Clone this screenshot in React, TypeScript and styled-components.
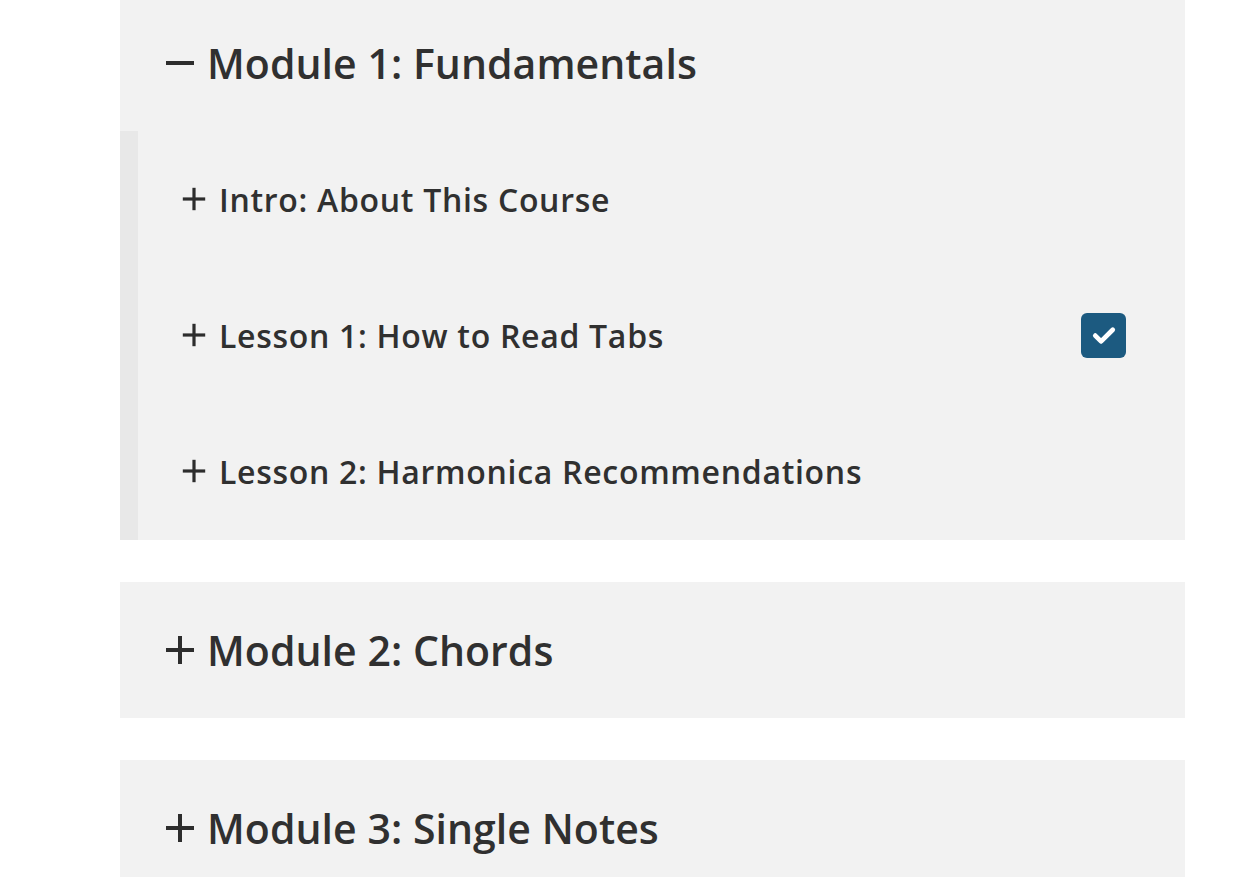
import React from "react";
import styled, { createGlobalStyle } from "styled-components";

const Global = createGlobalStyle`
  html, body { margin: 0; padding: 0; background: #ffffff; }
  body { font-family: "Open Sans", "Lato", "Noto Sans", sans-serif; color: #2f2f2f; }
`;

const Page = styled.div`
  padding-left: 120px;
  width: 1065px;
  margin-top: -5px;
  display: flex;
  flex-direction: column;
  gap: 42px;
`;

const Card = styled.section`
  background: #f2f2f2;
`;

const Header = styled.div`
  height: 136px;
  display: flex;
  align-items: center;
  padding-left: 45px;
  gap: 12px;
`;

const HeaderTitle = styled.h2`
  margin: 0;
  font-size: 41px;
  font-weight: 600;
  letter-spacing: 0.05px;
  color: #303030;
`;

const SubList = styled.div`
  border-left: 18px solid #e8e8e8;
  padding-bottom: 1px;
  display: flex;
  flex-direction: column;
`;

const Row = styled.div`
  height: 136px;
  display: flex;
  align-items: center;
  padding-left: 44px;
  padding-right: 59px;
  gap: 13px;
`;

const RowTitle = styled.span`
  font-size: 32px;
  font-weight: 600;
  letter-spacing: 0.7px;
  color: #303030;
  flex: 1;
`;

const Check = styled.span`
  width: 45px;
  height: 45px;
  border-radius: 6px;
  background: #1c5a80;
  display: flex;
  align-items: center;
  justify-content: center;
`;

const Sign = ({ minus, size }: { minus?: boolean; size: number }) => (
  <svg width={size} height={size} viewBox="0 0 30 30" style={{ flex: "none" }}>
    <path d="M1 15 H29" stroke="#2d2d2d" strokeWidth="4" />
    {!minus && <path d="M15 1 V29" stroke="#2d2d2d" strokeWidth="4" />}
  </svg>
);

const lessons = [
  { title: "Intro: About This Course", done: false },
  { title: "Lesson 1: How to Read Tabs", done: true },
  { title: "Lesson 2: Harmonica Recommendations", done: false },
];

export default function App() {
  return (
    <>
      <Global />
      <Page>
        <Card>
          <Header>
            <Sign minus size={30} />
            <HeaderTitle>Module 1: Fundamentals</HeaderTitle>
          </Header>
          <SubList>
            {lessons.map((l) => (
              <Row key={l.title}>
                <Sign size={24} />
                <RowTitle>{l.title}</RowTitle>
                {l.done && (
                  <Check>
                    <svg width="28" height="28" viewBox="0 0 24 24">
                      <path d="M4.5 12.5 L9.5 17.5 L19.5 7.5" fill="none" stroke="#fff" strokeWidth="4" strokeLinecap="round" strokeLinejoin="round" />
                    </svg>
                  </Check>
                )}
              </Row>
            ))}
          </SubList>
        </Card>
        <Card>
          <Header>
            <Sign size={30} />
            <HeaderTitle>Module 2: Chords</HeaderTitle>
          </Header>
        </Card>
        <Card>
          <Header>
            <Sign size={30} />
            <HeaderTitle>Module 3: Single Notes</HeaderTitle>
          </Header>
        </Card>
      </Page>
    </>
  );
}
